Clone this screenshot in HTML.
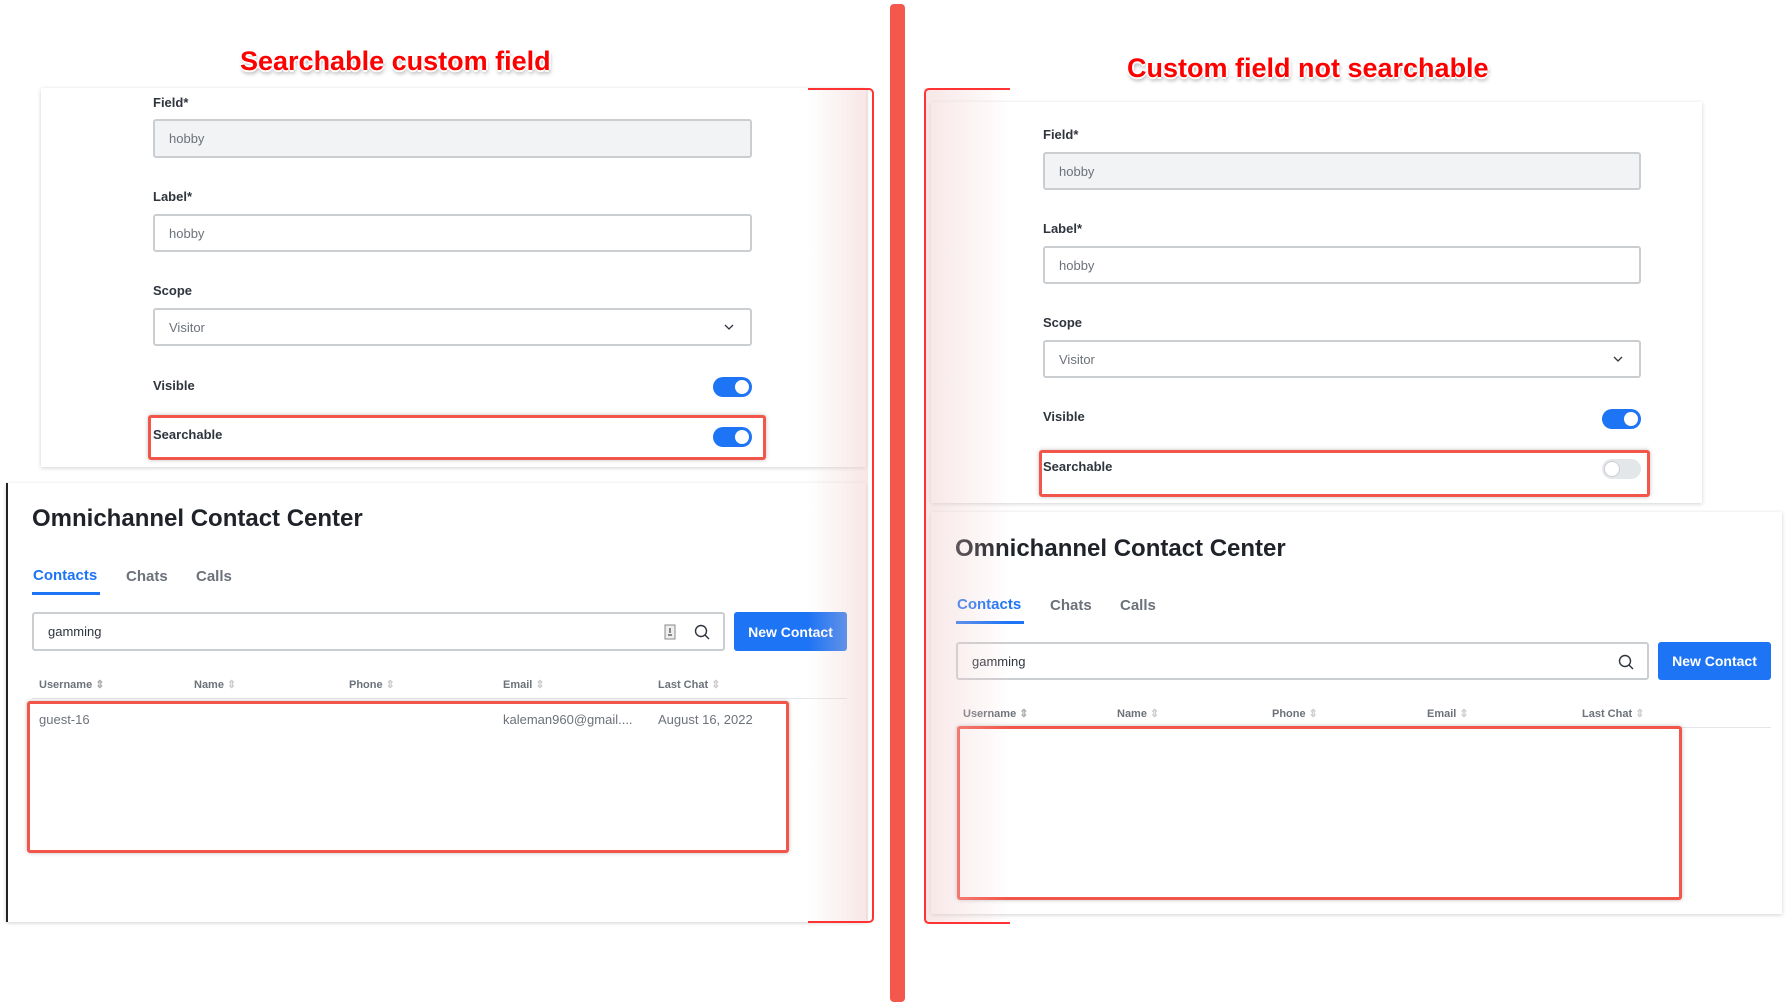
<!DOCTYPE html>
<html><head><meta charset="utf-8"><style>
*{box-sizing:border-box;margin:0;padding:0}
body{width:1787px;height:1004px;background:#fff;position:relative;overflow:hidden;font-family:"Liberation Sans",sans-serif;color:#2f343d}
.a{position:absolute}
.card{position:absolute;background:#fff;box-shadow:0 1px 4px rgba(0,0,0,.18)}
.lbl{position:absolute;font-size:13px;font-weight:bold;color:#2f343d}
.inp{position:absolute;border:2px solid #cbced1;border-radius:3px;font-size:13px;color:#6c727a;padding-left:14px;display:flex;align-items:center;background:#fff}
.tg{position:absolute;width:39px;height:20px;border-radius:10px;background:#1d74f5}
.tg::after{content:"";position:absolute;right:3px;top:3px;width:14px;height:14px;border-radius:50%;background:#fff}
.tg.off{background:#e4e7ea}
.tg.off::after{left:3px;right:auto;box-shadow:0 0 0 1px #cbced1}
.rb{position:absolute;border:3px solid #f25549;border-radius:3px;box-shadow:0 0 4px rgba(0,0,0,.25)}
.ttl{position:absolute;font-size:27px;font-weight:bold;color:#f00;text-shadow:-2px 0 #fff,2px 0 #fff,0 -2px #fff,0 2px #fff,1px 3px 4px rgba(0,0,0,.4);white-space:nowrap}
.h{position:absolute;font-size:24px;font-weight:bold;color:#1f2329}
.tab{position:absolute;font-size:15px;font-weight:bold;color:#6c727a}
.th{position:absolute;font-size:11px;font-weight:bold;color:#6c727a}
.td{position:absolute;font-size:13px;color:#6c727a}
.btn{position:absolute;background:#1d74f5;color:#fff;font-size:14px;font-weight:bold;border-radius:3px;display:flex;align-items:center;justify-content:center}
.fade{position:absolute;background:linear-gradient(90deg,rgba(240,200,200,0),rgba(240,205,205,.5))}
.fadeL{position:absolute;background:linear-gradient(270deg,rgba(240,200,200,0),rgba(240,205,205,.5))}
</style></head><body>

<div class="a" style="left:890px;top:4px;width:15px;height:998px;background:#f4574b;border-radius:4px"></div>

<div class="ttl" style="left:240px;top:46px">Searchable custom field</div>
<div class="card" style="left:41px;top:88px;width:825px;height:379px"></div>
<div class="lbl" style="left:153px;top:95px">Field*</div>
<div class="inp" style="left:153px;top:119px;width:599px;height:39px;background:#f2f3f5">hobby</div>
<div class="lbl" style="left:153px;top:189px">Label*</div>
<div class="inp" style="left:153px;top:214px;width:599px;height:38px">hobby</div>
<div class="lbl" style="left:153px;top:283px">Scope</div>
<div class="inp" style="left:153px;top:308px;width:599px;height:38px">Visitor<svg class="a" style="right:16px;top:13px" width="10" height="8" viewBox="0 0 10 8"><path d="M1 2l4 4 4-4" fill="none" stroke="#2f343d" stroke-width="1.3"/></svg></div>
<div class="lbl" style="left:153px;top:378px">Visible</div>
<div class="tg" style="left:713px;top:377px"></div>
<div class="lbl" style="left:153px;top:427px">Searchable</div>
<div class="tg" style="left:713px;top:427px"></div>
<div class="rb" style="left:148px;top:415px;width:618px;height:45px"></div>

<div class="card" style="left:6px;top:483px;width:860px;height:439px;border-left:2px solid #222"></div>
<div class="h" style="left:32px;top:505px">Omnichannel Contact Center</div>
<div class="tab" style="left:33px;top:567px;color:#1d74f5">Contacts</div>
<div class="tab" style="left:126px;top:568px">Chats</div>
<div class="tab" style="left:196px;top:568px">Calls</div>
<div class="a" style="left:32px;top:592px;width:68px;height:3px;background:#1d74f5"></div>
<div class="inp" style="left:32px;top:612px;width:693px;height:39px;color:#2f343d">gamming
<svg class="a" style="left:630px;top:10px" width="12" height="16" viewBox="0 0 12 16"><rect x="1" y="1" width="10" height="14" fill="#eee" stroke="#888"/><path d="M6 4v5M4 11h4" stroke="#666" stroke-width="1.5"/></svg>
<svg class="a" style="left:660px;top:10px" width="16" height="16" viewBox="0 0 16 16"><circle cx="7" cy="7" r="5.5" fill="none" stroke="#2f343d" stroke-width="1.4"/><path d="M11 11l4 4" stroke="#2f343d" stroke-width="1.4"/></svg></div>
<div class="btn" style="left:734px;top:612px;width:113px;height:39px">New Contact</div>
<div class="th" style="left:39px;top:678px">Username <span style="color:#aaa">⇕</span></div>
<div class="th" style="left:194px;top:678px">Name <span style="color:#ccc">⇕</span></div>
<div class="th" style="left:349px;top:678px">Phone <span style="color:#ccc">⇕</span></div>
<div class="th" style="left:503px;top:678px">Email <span style="color:#ccc">⇕</span></div>
<div class="th" style="left:658px;top:678px">Last Chat <span style="color:#ccc">⇕</span></div>
<div class="a" style="left:32px;top:698px;width:815px;height:1px;background:#e4e7ea"></div>
<div class="td" style="left:39px;top:712px">guest-16</div>
<div class="td" style="left:503px;top:712px">kaleman960@gmail....</div>
<div class="td" style="left:658px;top:712px">August 16, 2022</div>
<div class="rb" style="left:27px;top:701px;width:762px;height:152px"></div>

<div class="fade" style="left:808px;top:88px;width:60px;height:835px"></div>
<div class="a" style="left:808px;top:88px;width:66px;height:835px;border:2px solid #f33;border-left:none;border-radius:0 5px 5px 0"></div>

<div class="ttl" style="left:1127px;top:53px">Custom field not searchable</div>
<div class="card" style="left:931px;top:102px;width:771px;height:401px"></div>
<div class="lbl" style="left:1043px;top:127px">Field*</div>
<div class="inp" style="left:1043px;top:152px;width:598px;height:38px;background:#f2f3f5">hobby</div>
<div class="lbl" style="left:1043px;top:221px">Label*</div>
<div class="inp" style="left:1043px;top:246px;width:598px;height:38px">hobby</div>
<div class="lbl" style="left:1043px;top:315px">Scope</div>
<div class="inp" style="left:1043px;top:340px;width:598px;height:38px">Visitor<svg class="a" style="right:16px;top:13px" width="10" height="8" viewBox="0 0 10 8"><path d="M1 2l4 4 4-4" fill="none" stroke="#2f343d" stroke-width="1.3"/></svg></div>
<div class="lbl" style="left:1043px;top:409px">Visible</div>
<div class="tg" style="left:1602px;top:409px"></div>
<div class="lbl" style="left:1043px;top:459px">Searchable</div>
<div class="tg off" style="left:1602px;top:459px"></div>
<div class="rb" style="left:1039px;top:450px;width:611px;height:47px"></div>

<div class="card" style="left:931px;top:512px;width:851px;height:402px"></div>
<div class="h" style="left:955px;top:535px">Omnichannel Contact Center</div>
<div class="tab" style="left:957px;top:596px;color:#1d74f5">Contacts</div>
<div class="tab" style="left:1050px;top:597px">Chats</div>
<div class="tab" style="left:1120px;top:597px">Calls</div>
<div class="a" style="left:956px;top:621px;width:68px;height:3px;background:#1d74f5"></div>
<div class="inp" style="left:956px;top:642px;width:693px;height:38px;color:#2f343d">gamming
<svg class="a" style="left:660px;top:10px" width="16" height="16" viewBox="0 0 16 16"><circle cx="7" cy="7" r="5.5" fill="none" stroke="#2f343d" stroke-width="1.4"/><path d="M11 11l4 4" stroke="#2f343d" stroke-width="1.4"/></svg></div>
<div class="btn" style="left:1658px;top:642px;width:113px;height:38px">New Contact</div>
<div class="th" style="left:963px;top:707px">Username <span style="color:#aaa">⇕</span></div>
<div class="th" style="left:1117px;top:707px">Name <span style="color:#ccc">⇕</span></div>
<div class="th" style="left:1272px;top:707px">Phone <span style="color:#ccc">⇕</span></div>
<div class="th" style="left:1427px;top:707px">Email <span style="color:#ccc">⇕</span></div>
<div class="th" style="left:1582px;top:707px">Last Chat <span style="color:#ccc">⇕</span></div>
<div class="a" style="left:956px;top:727px;width:815px;height:1px;background:#e4e7ea"></div>
<div class="rb" style="left:957px;top:726px;width:725px;height:174px"></div>

<div class="fadeL" style="left:924px;top:88px;width:86px;height:836px"></div>
<div class="a" style="left:924px;top:88px;width:86px;height:836px;border:2px solid #f33;border-right:none;border-radius:5px 0 0 5px"></div>

</body></html>
